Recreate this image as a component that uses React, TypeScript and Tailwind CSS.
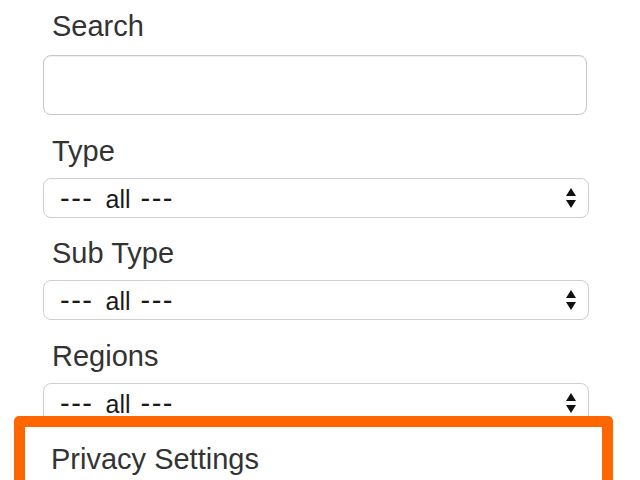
import React from "react";

const FONT = { fontFamily: '"Liberation Sans", Arial, Helvetica, sans-serif' };

// 上下の三角（select の矢印）
const UpDown = () => (
  <svg width="12" height="22" viewBox="0 0 12 22" className="shrink-0">
    <path d="M1 9 L6 1 L11 9 Z" fill="#111" />
    <path d="M1 13 L11 13 L6 21 Z" fill="#111" />
  </svg>
);

const Label = ({ children, className = "" }: { children: React.ReactNode; className?: string }) => (
  <div className={`pl-[9px] text-[29px] leading-[29px] text-[#333] ${className}`}>{children}</div>
);

const FakeSelect = ({ className = "" }: { className?: string }) => (
  <div
    className={`flex h-[40px] w-[546px] items-center justify-between rounded-[8px] border border-[#cfcfcf] bg-white pl-[16px] pr-[11px] pt-[2px] text-[25px] leading-[25px] text-[#1a1a1a] ${className}`}
  >
    <span className="whitespace-nowrap">
      <span className="text-[29px] tracking-[1.5px]">---</span>
      <span className="ml-[12px]">all</span>
      <span className="ml-[10px] text-[29px] tracking-[1.5px]">---</span>
    </span>
    <span className="-mt-[2px] flex">
      <UpDown />
    </span>
  </div>
);

export default function App() {
  return (
    <div className="h-[480px] w-[640px] overflow-hidden bg-white" style={FONT}>
      <div className="ml-[43px] w-[546px] pt-[12px]">
        <Label>Search</Label>
        <input
          type="text"
          className="mt-[14px] block h-[60px] w-[544px] rounded-[8px] border border-[#c7c7c7] bg-white px-3 shadow-[inset_0_1px_1px_rgba(0,0,0,0.06)] outline-none"
        />

        <Label className="mt-[22px]">Type</Label>
        <FakeSelect className="mt-[12px]" />

        <Label className="mt-[21px]">Sub Type</Label>
        <FakeSelect className="mt-[12px]" />

        <Label className="mt-[22px]">Regions</Label>
        <FakeSelect className="mt-[12px]" />

        {/* ハイライト枠 */}
        <div className="relative -ml-[29px] -mt-[7px] w-[599px] rounded-[5px] border-[11px] border-[#ff6600] bg-white pb-[40px] pl-[26px] pt-[18px]">
          <div className="text-[29px] leading-[29px] text-[#333]">Privacy Settings</div>
        </div>
      </div>
    </div>
  );
}
